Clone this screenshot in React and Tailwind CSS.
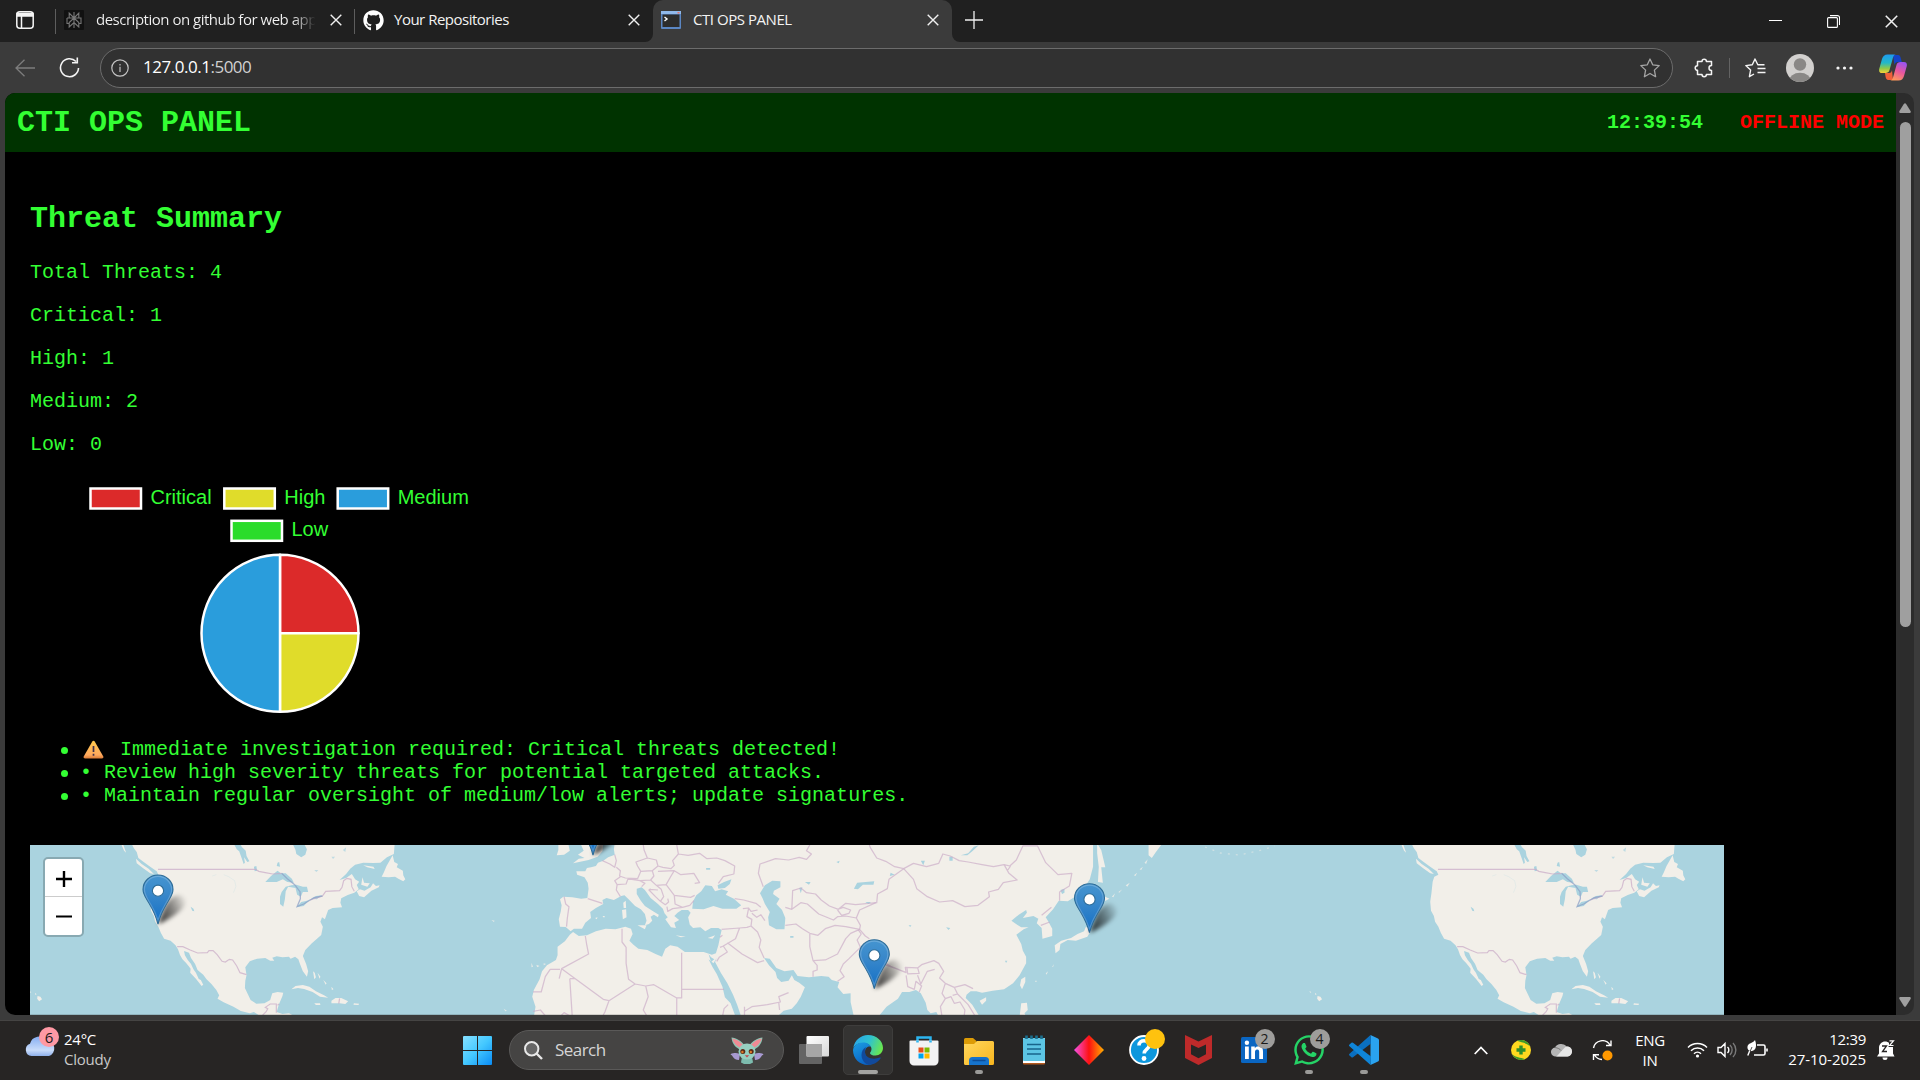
import React from "react";
import { FaWhatsapp, FaGithub } from "react-icons/fa";

const UI = "font-['Open_Sans','Noto_Sans',sans-serif]";
const MONO = "font-['Liberation_Mono',monospace]";

/* ---------- small shared icons ---------- */

function Cross({ size = 12, className = "" }) {
  return (
    <svg width={size} height={size} viewBox="0 0 12 12" className={className} fill="none" stroke="#f0f0f0" strokeWidth="1.4">
      <path d="M.7.7 11.3 11.3M11.3.7.7 11.3" />
    </svg>
  );
}

/* ---------- browser tab strip ---------- */

function TabStrip() {
  return (
    <div className={`flex h-[42px] w-full bg-[#202020] text-[15px] text-[#f3f3f3] ${UI}`}>
      <div className="flex h-10 w-[55px] items-center pl-4">
        <svg width="18" height="18" viewBox="0 0 18 18" fill="none" stroke="#f5f5f5" strokeWidth="1.5">
          <rect x=".8" y=".8" width="16.4" height="16.4" rx="3" />
          <path d="M1 2.5h16v2.5H1z" fill="#f5f5f5" />
          <path d="M5.5 5v12" />
        </svg>
      </div>
      <div className="mt-[9px] h-[25px] w-px bg-[#5e5e5e]" />
      <div className="flex h-10 w-[298px] items-center pl-2">
        <svg width="20" height="20" viewBox="0 0 20 20" className="shrink-0">
          <rect width="20" height="20" rx="1" fill="#111" />
          <g fill="none" stroke="#777" strokeWidth="1.1">
            <path d="M10 2v16M10 8 5.2 3.2V8M10 8l4.800-4.800V8M3 8h14v5.500h-2.200M3 8v5.500h2.200M10 8l-4.800 4.600V17L10 12.600l4.800 4.400v-4.400L10 8" />
          </g>
        </svg>
        <div className="-mt-0.5 ml-3 w-[224px] overflow-hidden bg-[linear-gradient(90deg,#f3f3f3_88%,#f3f3f300_98%)] bg-clip-text whitespace-nowrap text-transparent tracking-[-0.49px]">
          description on github for web app
        </div>
        <Cross className="ml-[10px] shrink-0" />
      </div>
      <div className="mt-[9px] h-[25px] w-px bg-[#5e5e5e]" />
      <div className="flex h-10 w-[298px] items-center pl-2">
        <FaGithub size={21} color="#fff" />
        <div className="-mt-0.5 ml-[10px] w-[234px] tracking-[-0.5px]">Your Repositories</div>
        <Cross className="shrink-0" />
      </div>
      <svg width="8" height="8" className="-ml-2 mr-0 self-end" viewBox="0 0 8 8"><path d="M8 0A8 8 0 0 1 0 8H8z" fill="#3b3b3b" /></svg>
      <div className="flex h-[42px] w-[299px] items-center rounded-t-[10px] bg-[#3b3b3b] pb-0.5 pl-2">
        <svg width="20" height="18" viewBox="0 0 20 18">
          <rect width="20" height="18" rx="1" fill="#5b87c4" />
          <rect width="20" height="3" fill="#8fb8ea" />
          <path d="M16.500 1h2v1.500h-2z" fill="#e0716a" />
          <rect x="1.500" y="3.500" width="17" height="12.500" fill="#2c2c2c" />
          <path d="M3.500 6 6 8 3.500 10" stroke="#fff" strokeWidth="1.400" fill="none" />
        </svg>
        <div className="-mt-0.5 ml-[12px] w-[234px] tracking-[-0.45px]">CTI OPS PANEL</div>
        <Cross className="shrink-0" />
      </div>
      <svg width="8" height="8" className="-mr-2 self-end" viewBox="0 0 8 8"><path d="M0 0A8 8 0 0 0 8 8H0z" fill="#3b3b3b" /></svg>
      <svg width="18" height="18" viewBox="0 0 18 18" className="mt-[11px] ml-[13px]" stroke="#f0f0f0" strokeWidth="1.300">
        <path d="M9 0v18M0 9h18" />
      </svg>
      <div className="mr-[22px] ml-auto flex items-center gap-[45px]">
        <svg width="13" height="12" stroke="#fff" strokeWidth="1"><path d="M0 5.500h13" /></svg>
        <svg width="13" height="13" viewBox="0 0 13 13" fill="none" stroke="#fff" strokeWidth="1.100">
          <rect x=".6" y="2.600" width="9.800" height="9.800" rx="1" />
          <path d="M3 .6h7.500a2 2 0 0 1 2 2V10" />
        </svg>
        <Cross size={13} />
      </div>
    </div>
  );
}

/* ---------- browser toolbar ---------- */

function Toolbar() {
  return (
    <div className={`flex h-[51px] w-full items-center bg-[#3b3b3b] ${UI}`}>
      <svg width="16" height="18" viewBox="0 0 20 18" className="ml-[15px] w-5" fill="none" stroke="#7d7d7d" strokeWidth="1.300">
        <path d="M20 9H1M9.500 .8 1 9l8.500 8.200" />
      </svg>
      <svg width="21" height="21" viewBox="0 0 21 21" className="ml-[24px]" fill="none" stroke="#f4f4f4" strokeWidth="1.600">
        <path d="M17 4.500A9 9 0 1 0 19.500 11M18.300.5v5.300h-5.300" />
      </svg>
      <div className="ml-5 flex h-10 w-[1573px] items-center rounded-full border border-[#6c6c6c] bg-[#313131]">
        <svg width="18" height="18" viewBox="0 0 18 18" className="ml-[10px]" fill="none" stroke="#c4c4c4" strokeWidth="1.200">
          <circle cx="9" cy="9" r="8.200" />
          <path d="M9 7.800V13M9 5v1.400" />
        </svg>
        <div className="-mt-px ml-3.5 text-[17px] tracking-[-0.480px] text-white">127.0.0.1<span className="text-[#d0d0d0]">:5000</span></div>
        <svg width="20" height="20" viewBox="0 0 20 20" className="mr-3 ml-auto" fill="none" stroke="#a5a5a5" strokeWidth="1.300" strokeLinejoin="round">
          <path d="M10 1 12.700 6.800 19.200 7.600 14.400 12.100 15.600 18.700 10 15.500 4.400 18.700 5.600 12.100.8 7.600 7.300 6.800z" />
        </svg>
      </div>
      <svg width="20" height="20" viewBox="0 0 20 20" className="ml-[21px]" fill="none" stroke="#f4f4f4" strokeWidth="1.500" strokeLinejoin="round">
        <path d="M3.500 3.500H8a2.200 2.200 0 0 1 4.400 0H17.500V7.500a2.500 2.500 0 0 0 0 5V16.500H12.400a2.200 2.200 0 0 1-4.400 0H3.500V12.300a2.300 2.300 0 0 1 0-4.600z" />
      </svg>
      <div className="ml-[15px] h-5 w-px bg-[#636363]" />
      <svg width="21" height="20" viewBox="0 0 21 20" className="ml-[15px]" fill="none" stroke="#f4f4f4" strokeWidth="1.400" strokeLinejoin="round">
        <path d="M19.500 6.800 12.800 6.800 10 1 7.300 6.800.8 7.600 5.600 12.100 4.400 18.700 9 16M12.500 10.500h8M12.500 14.500h8" />
      </svg>
      <svg width="28" height="28" viewBox="0 0 28 28" className="ml-5">
        <clipPath id="avatarClip"><circle cx="14" cy="14" r="14" /></clipPath>
        <g clipPath="url(#avatarClip)">
          <rect width="28" height="28" fill="#d2d0ce" />
          <circle cx="14" cy="10.500" r="6.200" fill="#8a8886" />
          <ellipse cx="14" cy="27" rx="11" ry="8.300" fill="#8a8886" />
        </g>
      </svg>
      <svg width="17" height="4" viewBox="0 0 17 4" className="ml-[22px]" fill="#f4f4f4">
        <circle cx="2" cy="2" r="1.600" /><circle cx="8.500" cy="2" r="1.600" /><circle cx="15" cy="2" r="1.600" />
      </svg>
      <svg width="28" height="27" viewBox="0 0 28 27" className="ml-[26px]">
        <defs>
          <linearGradient id="copL" x1="0" y1="0" x2="0" y2="1">
            <stop offset="0" stopColor="#1e9bf0" /><stop offset=".45" stopColor="#23b8c9" /><stop offset=".75" stopColor="#8fc94a" /><stop offset="1" stopColor="#f7d038" />
          </linearGradient>
          <linearGradient id="copR" x1=".7" y1="0" x2=".3" y2="1">
            <stop offset="0" stopColor="#9b54f0" /><stop offset=".5" stopColor="#e9579c" /><stop offset="1" stopColor="#ff9a5a" />
          </linearGradient>
        </defs>
        <path d="M14 1h5c2 0 2.500 2 3 4l.8 3H19c-2 0-3 1-3.500 3z" fill="#1443c8" />
        <path d="M14 26H9.500c-2 0-2.500-1.500-3-3.500L6 19h4c2 0 2.500-1 3-3z" fill="#f0603a" />
        <path d="M8.500.5H17c-2 0-2.500 1.500-3 3L10.500 16c-.6 2.200-2 3-4 3H3C.6 19-.2 17.500.2 15L3 5C4 2 5.500.5 8.500.5z" fill="url(#copL)" />
        <path d="M19.500 26.500H11c2 0 2.500-1.500 3-3l3.500-12.500c.6-2.200 2-3 4-3H25c2.400 0 3.200 1.500 2.800 4L25 22c-1 3-2.500 4.500-5.500 4.500z" fill="url(#copR)" />
      </svg>
    </div>
  );
}

/* ---------- chart ---------- */

const legend = [
  { label: "Critical", color: "#dc2a2a", x: 60.500, y: 12.500 },
  { label: "High", color: "#e0dc2a", x: 194.300, y: 12.500 },
  { label: "Medium", color: "#2a9ddc", x: 307.700, y: 12.500 },
  { label: "Low", color: "#2adc2a", x: 201.500, y: 44.800 },
];

function ThreatChart() {
  return (
    <svg width="500" height="250" viewBox="0 0 500 250" className="block">
      {legend.map((l) => (
        <g key={l.label}>
          <rect x={l.x} y={l.y} width="50.500" height="20" fill={l.color} stroke="#fff" strokeWidth="2.500" />
          <text x={l.x + 60} y={l.y + 15.500} fill="#33ff33" fontSize="20" fontFamily="Liberation Sans, Arial, sans-serif">{l.label}</text>
        </g>
      ))}
      <g stroke="#fff" strokeWidth="2.500" strokeLinejoin="round">
        <path d="M250 157.300V78.800A78.500 78.500 0 0 1 328.500 157.300z" fill="#dc2a2a" />
        <path d="M250 157.300H328.500A78.500 78.500 0 0 1 250 235.800z" fill="#e0dc2a" />
        <path d="M250 157.300V235.800A78.500 78.500 0 0 1 250 78.800z" fill="#2a9ddc" />
      </g>
    </svg>
  );
}

/* ---------- map ---------- */

function NorthAmerica() {
  return (
    <g transform="translate(-30,-15) scale(0.40816,0.33333)">
      <g fill="#f2efe9">
        <path d="M322 40 328 55 335 66 339 84 352 96 368 110 384 124 388 134 378 140 374 155 371 190 368 215 370 242 377 258 380 275 388 290 394 308 402 326 418 332 430 346 436 358 441 375 447 388 456 399 462 408 467 416 466 428 480 446 494 468 498 464 492 450 487 447 480 428 474 418 468 402 460 390 453 376 451 363 463 368 468 384 478 402 484 420 498 434 506 448 518 462 530 480 537 496 533 506 548 517 572 530 590 543 612 550 622 546 640 560H724L708 550 692 552 678 546 683 524 692 498 694 488 680 486 667 490 662 510 648 520 628 521 614 510 607 492 600 474 601 452 604 436 601 412 612 394 630 386 650 384 662 392 672 392 667 383 678 379 692 382 708 380 712 386 723 380 731 388 735 402 742 424 752 440 755 424 750 402 742 378 748 360 764 340 778 325 787 315 791 290 785 275 789 262 796 268 804 240 815 234 838 232 834 218 836 205 852 195 868 188 879 178 874 165 880 155 870 148 862 132 848 144 832 150 848 132 858 116 870 104 890 98 915 99 932 98 948 82 965 72 967 40Z" />
        <path d="M962 76 966 96 975 102 972 112 987 122 988 136 993 148 988 154 976 146 968 140 952 142 935 140 940 128 947 108 953 95ZM874 184 882 178 893 182 908 172 914 160 921 168 930 166 928 172 910 182 892 202 880 198ZM888 142 892 158 906 160 900 170 885 164ZM890 106 915 110 918 117 900 112ZM333 86 347 102 364 116 377 132 368 130 350 114 335 100ZM296 40 304 62 309 68 302 44Z" />
        <path d="M714 478 724 468 742 465 758 470 774 484 794 496 804 503 784 500 766 486 745 477 730 474ZM812 512 822 504 836 504 853 514 846 522 832 520 812 520ZM770 520 784 520 785 525 774 525ZM867 520 880 521 878 525 866 524ZM92 498 99 500 103 508 96 514 91 506ZM86 489 90 493 86 494ZM72 484 77 486 74 488ZM767 424 771 428 774 442 770 448ZM778 428 785 440 783 446ZM792 450 800 460 798 464ZM812 470 817 478 813 480Z" />
      </g>
      <g fill="#aad3df">
        <path d="M574 44 580 58 586 64 592 84 597 102 600 98 598 82 606 96 611 94 604 78 602 62 592 50 590 44ZM718 44 724 60 726 72 738 82 748 74 752 58 746 44ZM650 156 664 138 680 122 688 130 700 130 715 146 720 158 704 156 693 148 678 156ZM690 186 700 170 714 166 726 164 742 170 752 170 755 186 742 186 737 200 728 194 724 174 706 170 700 184 698 208 694 230 686 222 686 200ZM726 232 738 216 752 212 760 208 744 228ZM762 206 774 198 789 196 776 208ZM467 230 474 236 476 244 471 242ZM680 98 684 96 686 110 678 108ZM622 110 628 108 630 122 624 124Z" />
        <path d="M770 120h10l-5 6zM812 80h9l-5 7zM840 60l8-8-2 14z" opacity=".7" />
      </g>
      <g fill="none" stroke="#aad3df" strokeWidth="1" opacity=".5">
        <path d="M520 138 530 134M548 134 560 140 575 152 578 170 572 188" />
      </g>
      <g fill="none" stroke="#c9a9c6" strokeWidth="1.200" strokeOpacity=".7">
        <path vectorEffect="non-scaling-stroke" d="M387 118H626L634 124 650 128 668 132 690 130M760 210 790 198 798 184 832 182 838 172 842 152 850 145 860 148 862 170 868 184M434 350 448 350 466 360 484 369 508 368 512 362 522 362 532 374 544 394 552 396 562 388 570 390 580 408 588 428 604 434M640 560 652 545 656 536 650 532 662 522 677 522 677 548M680 526 684 522M832 505 830 521" />
        <path vectorEffect="non-scaling-stroke" stroke="#8a9dc4" strokeWidth="1.300" d="M690 130 704 146 722 164 735 185 736 206 728 230 744 222 760 210 770 203 790 198" />
      </g>
    </g>
  );
}

function Eurasia() {
  return (
    <g transform="translate(530,-15) scale(0.40816,0.33333)">
      <path fill="#f2efe9" d="M134 40 132 58 134 74 118 82 106 92 93 98 88 108 76 112 66 114 62 124 40 124 42 134 60 142 68 158 70 176 67 204 52 206 30 202 8 200 0 208 4 226 2 244 -3 268 0 290 14 291 26 304 34 296 54 296 62 278 76 264 74 246 88 234 106 222 104 210 114 204 132 210 150 198 158 196 168 208 184 228 198 238 208 252 212 272 208 286 218 282 226 272 222 260 230 254 240 262 242 254 226 242 208 228 198 212 188 192 188 176 200 172 208 180 222 204 240 222 252 236 256 250 264 262 258 268 272 292 284 294 280 278 292 270 280 258 288 248 298 240 314 240 320 248 314 262 318 284 326 294 344 292 356 304 370 294 388 294 396 300 392 322 388 346 382 370 372 374 352 366 328 366 306 366 288 350 270 346 258 356 250 380 234 372 214 360 192 356 180 344 170 332 178 312 174 296 160 290 136 298 112 296 88 304 66 316 46 318 32 306 24 314 12 334 -6 350 -6 376 -10 390 -32 406 -44 424 -50 448 -64 480 -68 500 -60 530 -64 560H430L418 520 404 502 398 470 384 432 374 412 364 388 376 400 384 384 380 396 394 428 410 460 424 494 434 524 444 560H532L548 542 568 536 580 520 590 500 600 472 586 458 574 450 568 436 560 452 542 456 532 444 528 426 512 406 500 384 514 386 530 414 550 424 572 420 582 438 610 442 640 438 658 440 666 450 684 456 680 472 694 492 712 490 712 516 720 560H780L800 530 828 506 838 486 856 486 872 480 884 490 896 518 900 540 908 550 922 546 928 560H1028L1010 524 994 504 996 494 1006 484 1020 484 1034 488 1060 482 1088 478 1110 460 1126 436 1142 400 1142 380 1134 362 1130 342 1118 314 1136 298 1148 292 1130 292 1120 284 1106 272 1124 254 1142 240 1144 248 1134 264 1160 258 1172 266 1168 280 1180 294 1182 326 1206 318 1206 296 1196 274 1190 262 1208 238 1222 212 1244 214 1262 200 1284 174 1298 148 1306 110 1306 40Z" />
      <g fill="#f2efe9">
        <path d="M50 40H106L104 64 92 80 70 90 32 100 46 86 60 84 44 74 58 62ZM-4 40H20L24 62 10 74 -8 76 -4 60ZM152 240 162 238 163 262 154 268ZM155 218 161 212 162 234 156 234ZM190 286 212 286 208 298ZM283 316 308 320 296 322ZM362 324 380 316 374 326ZM86 264 92 262 90 268ZM104 258h6l-2 5zM1316 40 1326 60 1336 112 1326 112 1330 158 1318 156 1320 110 1316 70ZM1442 40H1476L1460 66 1450 84 1442 76ZM1280 212 1300 200 1322 192 1346 206 1334 214 1302 220 1286 232ZM1212 346 1228 332 1252 324 1268 312 1284 304 1288 292 1300 290 1300 304 1292 320 1264 332 1244 330 1226 342 1224 360 1214 370ZM1130 448 1140 440 1140 456 1132 478 1127 466ZM1028 512 1044 502 1044 512 1034 524ZM1130 520 1144 518 1146 540 1138 550 1142 560H1126Z" />
        <path opacity=".8" d="M1352 200 1360 190 1356 202ZM1368 186 1378 178 1370 188ZM1386 166 1396 158 1390 170ZM1406 136 1414 128 1410 138ZM1420 118 1428 110 1424 120ZM1432 98 1440 88 1436 102ZM1206 410 1210 402 1208 412ZM1190 430 1196 424 1192 434ZM1164 452h4v3h-4zM-168 270 -160 272 -162 276ZM-70 398 -66 410 -70 412ZM-58 404 -50 408 -56 412ZM-40 400 -34 402 -40 406ZM-138 536 -130 542 -134 544Z" />
      </g>
      <g fill="#aad3df">
        <path d="M324 236 326 214 334 196 346 184 356 166 372 168 380 184 396 178 412 184 406 194 426 206 444 226 432 236 398 236 376 228 352 238ZM386 166 402 156 420 148 416 162 404 174 388 176ZM490 190 502 166 520 152 540 154 540 172 524 182 522 192 538 206 530 222 544 240 552 264 550 298 530 298 512 286 510 262 514 246 502 222 496 204ZM720 176 728 158 770 154 768 164 742 164 730 178ZM982 76 1000 70 1014 50 1026 46 1010 64 998 76ZM884 92 894 92 890 106ZM954 80h8v12h-8zM810 128 820 134 808 138ZM748 216 762 216 756 222ZM600 156 614 156 610 164ZM586 174 594 172 590 190ZM564 318h8v5h-8zM946 292 956 294 952 300ZM854 286h7l-3 5zM1090 392h6l-3 7zM677 96 685 92 683 100ZM364 372 370 382 378 388 370 396ZM358 114h10v5h-10zM1226 180 1236 176 1236 188 1230 192Z" />
      </g>
      <g fill="none" stroke="#c9a9c6" strokeWidth="1.250" strokeOpacity=".65" strokeLinejoin="round">
        <path vectorEffect="non-scaling-stroke" d="M104 92 122 102 134 112 138 92 134 74M138 112 148 122 146 138 160 144 190 146 198 124 190 108 186 96 214 84 206 60 204 45M214 84 236 90 240 108 226 122 198 124M240 108 252 112 272 116 280 106 276 92 290 72 286 45M290 72 314 76 342 70 360 86 384 84 404 92 428 108 426 132 400 140 388 160M280 122 296 134 328 130 342 158 330 160M226 122 230 138 222 150 196 152 176 148 166 148 162 162 140 164 134 152 148 140M140 164 138 180 148 200M222 150 236 166 260 164 272 138 280 122 240 124M260 164 280 196 320 202 330 196M280 196 282 222 300 232 318 226 328 212M236 166 248 178 254 200 246 214 234 200 218 180 222 176M246 214 258 224 266 216 264 206M262 230 264 244 276 236 300 232M196 152 208 160 200 170M220 178 240 180M10 200 14 222 22 230 18 264 16 290M68 206 104 220" />
        <path vectorEffect="non-scaling-stroke" d="M428 206 450 210 480 220 492 232M448 236 462 234 468 244 484 240M462 236 458 260 470 268 468 288 484 306 492 330 488 352 500 384M470 250 482 262 492 254 502 272M396 298 440 294 458 292 468 288M440 294 430 326 400 348 392 352M400 348 410 366 390 382 384 394M410 338 446 372 484 398 500 392M392 322 398 316M552 286 578 282 594 296 612 310 632 316 650 296 674 286 700 290 734 298M612 312 612 350 620 392 650 390 680 372 700 326 712 310 734 298M620 392 630 406 630 420 620 424 620 440M552 232 568 238 570 182 590 174 604 188 626 192 640 210 660 228 682 238 700 220 724 224 776 218 778 192 802 176 806 148 842 116 820 110 798 94 776 84 760 52 758 45M498 170 486 130 490 102 528 86 560 90 586 82 604 88 616 72 604 62 612 45M568 238 590 218 606 222 634 252 670 270 680 260 700 258 726 264M680 238 694 232 712 240 708 250 690 256 680 240" />
        <path vectorEffect="non-scaling-stroke" d="M842 116 866 100 898 110 928 100 938 72 956 78 978 92 1000 96 1034 104 1062 110 1088 104 1100 130 1120 150 1086 158 1074 178 1050 186 1052 200 1024 226 992 230 962 212 930 216 900 200 874 176 866 148 842 116M1088 104 1102 108 1118 90 1134 48 1170 48 1190 98 1220 134 1254 130 1248 168 1224 186 1224 212M1104 108 1096 122M1180 256 1204 232M1178 286 1200 276M726 264 734 240 774 218M726 264 736 286 734 298 748 318 758 326M730 298 738 312 728 330 736 352 708 386 694 402 686 422 696 440 680 454M770 380 790 394 812 410 848 428 846 412 876 414 886 404 916 392 928 400 940 424 930 444 944 460 966 472 992 464 1012 476M790 394 796 404 846 426M850 414 852 432 880 430 876 412M848 436 852 470 868 478 872 454 886 468 880 486M876 436 884 462 900 424 918 418M944 460 936 490 944 506 932 530 936 560M944 506 958 500 966 520 980 516 992 540 990 560M966 472 974 492 962 496M974 492 1000 524 1018 560" />
        <path vectorEffect="non-scaling-stroke" d="M152 296 152 336 162 352 162 400 168 448 184 462 120 512 106 508 4 416 70 372 66 348 62 318M4 416 -2 446M0 418H-24L-36 440 -46 486H-66M24 446 30 560M24 446H38M184 462 210 468 216 500 204 540 214 560M210 468 230 464 286 504V560M298 368V504H286M298 478H402M120 512 110 546 104 560M-66 544 -48 540 -34 560M0 560 10 548 28 560M412 524 402 536 398 560M452 544 470 530 508 524 540 516 536 500 560 488M452 530 452 560M536 518 538 540" />
      </g>
    </g>
  );
}

function PinShape({ x, y }) {
  return (
    <g transform={`translate(${x},${y})`}>
      <path d="M0 0 6-16C10-26 18-31 24-28C30-25 28-18 22-13C16-8 8-3 0 0z" fill="url(#pinShade)" filter="url(#pinBlur)" />
      <path d="M0 0C-1.500-6-5-14-8.500-20C-12-26-15-29.500-15-34.500A15 14.500 0 0 1 15-34.500C15-29.500 12-26 8.500-20C5-14 1.500-6 0 0z" fill="url(#pinFill)" stroke="#2e6c97" strokeWidth="1.100" />
      <path d="M0-4C-2-10-5-16-7.500-20C-11-26-13.600-29.500-13.600-34.500A13.600 13.100 0 0 1 13.600-34.500C13.600-29.500 11-26 7.500-20C5-16 2-10 0-4z" fill="none" stroke="#fff" strokeOpacity=".2" strokeWidth="1.200" />
      <circle cx="0" cy="-33.300" r="5.600" fill="#fff" stroke="#2e6c97" strokeWidth="1.100" />
    </g>
  );
}

function WorldMap() {
  return (
    <div className="grid h-[170px] w-[1694px] overflow-hidden">
      <svg width="1694" height="170" viewBox="0 0 1694 170" className="col-start-1 row-start-1 block bg-[#aad3df]">
        <defs>
          <linearGradient id="pinFill" x1="0" y1="0" x2="0" y2="1">
            <stop offset="0" stopColor="#4595d0" /><stop offset=".4" stopColor="#3887ca" /><stop offset="1" stopColor="#126fc6" />
          </linearGradient>
          <linearGradient id="pinShade" x1="0" y1=".7" x2="1" y2=".2">
            <stop offset="0" stopColor="#000" stopOpacity=".75" /><stop offset=".5" stopColor="#000" stopOpacity=".45" /><stop offset="1" stopColor="#000" stopOpacity=".05" />
          </linearGradient>
          <filter id="pinBlur" x="-50%" y="-50%" width="200%" height="200%"><feGaussianBlur stdDeviation="2" /></filter>
        </defs>
        <NorthAmerica />
        <g transform="translate(1280,0)"><NorthAmerica /></g>
        <Eurasia />
        <g fill="none" stroke="#f2efe9" strokeDasharray="2 6" strokeWidth="1.300" opacity=".5">
          <path d="M1175 2 1190 8 1210 10 1232 5 1245 1" />
        </g>
        <PinShape x={563} y={10} />
        <PinShape x={128} y={79} />
        <PinShape x={1059.500} y={87.700} />
        <PinShape x={844.300} y={143.700} />
        <path d="M0 169.500H1694" stroke="#000" strokeOpacity=".14" />
      </svg>
      <div className="col-start-1 row-start-1 mt-3 ml-[13px] flex h-[80px] w-[41px] flex-col self-start rounded-[5px] border-2 border-[#88a9b2] bg-white">
        <div className="flex h-[38px] items-center justify-center border-b border-[#ccc]">
          <svg width="16" height="16" className="mt-0.5" stroke="#000" strokeWidth="2.400"><path d="M8 0V16M0 8H16" /></svg>
        </div>
        <div className="flex flex-1 items-center justify-center">
          <svg width="16" height="16" stroke="#000" strokeWidth="2.200"><path d="M0 8.500H16" /></svg>
        </div>
      </div>
    </div>
  );
}

/* ---------- page ---------- */

function Bullet() {
  return <span className="mt-0.5 mr-[12px] ml-[31px] size-[7px] shrink-0 rounded-full bg-[#33ff33]" />;
}

function Page() {
  return (
    <div className={`flex h-[922px] w-[1891px] flex-col overflow-hidden bg-black text-[20px] leading-[23px] text-[#33ff33] ${MONO}`}>
      <header className="flex h-[59px] shrink-0 items-center bg-[#003300] px-3 font-bold">
        <h1 className="text-[30px] leading-[34px]">CTI OPS PANEL</h1>
        <span className="ml-auto">12:39:54</span>
        <span className="ml-[37px] text-[#ff0000]">OFFLINE MODE</span>
      </header>
      <main className="flex flex-col pt-[50px] pl-[25px]">
        <h2 className="mb-[25px] text-[30px] leading-[34px] font-bold">Threat Summary</h2>
        <div className="flex flex-col gap-5">
          <p>Total Threats: 4</p>
          <p>Critical: 1</p>
          <p>High: 1</p>
          <p>Medium: 2</p>
          <p>Low: 0</p>
        </div>
        <div className="mt-5"><ThreatChart /></div>
        <ul className="mt-3 flex flex-col">
          <li className="flex h-[23px] items-center">
            <Bullet />
            <svg width="21" height="19" viewBox="0 0 21 19" className="mr-[16px] ml-[3px]">
              <defs>
                <linearGradient id="warnFill" x1="0" y1="0" x2="0" y2="1"><stop offset="0" stopColor="#ffc94d" /><stop offset=".8" stopColor="#ffa95e" /><stop offset="1" stopColor="#d97a36" /></linearGradient>
              </defs>
              <path d="M9.300 1.500a1.400 1.400 0 0 1 2.400 0L20.300 16.500a1.500 1.500 0 0 1-1.300 2H2a1.500 1.500 0 0 1-1.300-2z" fill="url(#warnFill)" />
              <path d="M10.500 6v6M10.500 13.800v2" stroke="#40304a" strokeWidth="1.700" />
            </svg>
            <span className="whitespace-pre">Immediate investigation required: Critical threats detected!</span>
          </li>
          <li className="flex h-[23px] items-center"><Bullet /><span>• Review high severity threats for potential targeted attacks.</span></li>
          <li className="flex h-[23px] items-center"><Bullet /><span>• Maintain regular oversight of medium/low alerts; update signatures.</span></li>
        </ul>
        <div className="mt-[38px]"><WorldMap /></div>
      </main>
    </div>
  );
}

function Scrollbar() {
  return (
    <div className="flex h-[922px] w-[18px] flex-col items-center bg-[#2c2c2c]">
      <svg width="12" height="10" viewBox="0 0 12 10" className="mt-[10px]"><path d="M5 .8Q6-.4 7 .8L11.700 8.300Q12 10 10.800 10H1.200Q0 10 .3 8.300z" fill="#9f9f9f" /></svg>
      <div className="mt-[9px] h-[505px] w-[11px] rounded-full bg-[#9f9f9f]" />
      <svg width="12" height="10" viewBox="0 0 12 10" className="mt-auto mb-2"><path d="M5 9.200Q6 10.400 7 9.200L11.700 1.700Q12 0 10.800 0H1.200Q0 0 .3 1.700z" fill="#9f9f9f" /></svg>
    </div>
  );
}

/* ---------- taskbar ---------- */

function EdgeIcon() {
  return (
    <svg width="30" height="30" viewBox="0 0 30 30">
      <defs>
        <linearGradient id="edTop" x1="0" y1=".3" x2="1" y2=".6"><stop offset="0" stopColor="#2aa6e8" /><stop offset=".5" stopColor="#2fc2cf" /><stop offset="1" stopColor="#6be84a" /></linearGradient>
        <linearGradient id="edL" x1="0" y1="0" x2=".5" y2="1"><stop offset="0" stopColor="#1b9de2" /><stop offset="1" stopColor="#0a62c4" /></linearGradient>
      </defs>
      <path d="M.3 13C1.500 5.500 7.500 0 15 0c8.500 0 15 6 15 13 0 4.500-3.500 7.500-7.500 7.500-3.500 0-5.500-1.300-5.500-2.600 0-.8 1.500-1.500 1.500-4C18.500 11 15 8 10 8 5.500 8 1.800 10 .3 13z" fill="url(#edTop)" />
      <path d="M0 15C.5 11 4.500 7.500 10 7.500c4 0 7 2 8 4.500-1.500-1-6-.5-6 5.500 0 6 5 9.500 9.500 9.500C19.500 29 17 30 15 30 6.500 30 0 23.500 0 15z" fill="url(#edL)" />
      <path d="M13 12c-3 1.500-4.500 4.500-4.500 8 0 5 3.500 9 7.500 10 5-.3 9-3 11.500-6.500.5-.8 0-1.200-.8-.9-6.200 2.700-14.700.5-14.700-5.600 0-2 .3-3.500 1-5z" fill="#114a9c" />
    </svg>
  );
}

function AppCell({ children, run }) {
  return (
    <div className="flex h-[50px] w-[55px] flex-col items-center pt-2.5">
      <div className="flex h-[30px] w-[30px] items-center justify-center">{children}</div>
      {run ? <div className="mt-[5px] h-1 w-2 rounded-full bg-[#9a9a98]" /> : null}
    </div>
  );
}

function Badge({ children, className }) {
  return (
    <span className={`absolute flex size-5 items-center justify-center rounded-full text-[14px] leading-none text-[#1a1a1a] ${className}`}>{children}</span>
  );
}

function Taskbar() {
  return (
    <div className={`flex h-[60px] w-full border-t border-[#454443] bg-[#272524] pt-1 text-[15px] leading-5 text-white ${UI}`}>
      <div className="relative mt-[4px] ml-[25px] flex w-[438px]">
        <svg width="31" height="25" viewBox="0 0 31 25" className="mt-[3px]">
          <defs><linearGradient id="cloudFill" x1="0" y1="0" x2="0" y2="1"><stop offset="0" stopColor="#86aef2" /><stop offset=".7" stopColor="#c9dcfa" /><stop offset="1" stopColor="#8fb0ea" /></linearGradient></defs>
          <path d="M6.500 24A6.300 6.300 0 0 1 5 11.800 9.500 9.500 0 0 1 22 8.500 8 8 0 0 1 24 24z" fill="url(#cloudFill)" />
        </svg>
        <Badge className="-top-[2px] left-[14px] bg-[#ff99a4] text-[15px]">6</Badge>
        <div className="ml-[8px] tracking-[-0.250px]">
          <div>24°C</div>
          <div className="text-[#c9c9c9]">Cloudy</div>
        </div>
      </div>
      <svg width="29" height="29" viewBox="0 0 29 29" className="mt-[11px]">
        <defs><linearGradient id="winFill" x1="0" y1="0" x2="1" y2="1"><stop offset="0" stopColor="#86e0ff" /><stop offset=".5" stopColor="#44c8ff" /><stop offset="1" stopColor="#0a8cf5" /></linearGradient></defs>
        <path d="M0 1a1 1 0 0 1 1-1H14V14H0zM15 0H28a1 1 0 0 1 1 1V14H15zM0 15H14V29H1a1 1 0 0 1-1-1zM15 15H29V28a1 1 0 0 1-1 1H15z" fill="url(#winFill)" />
      </svg>
      <div className="mt-[5px] ml-[17px] flex h-10 w-[275px] items-center rounded-full border border-[#5a5958] bg-[#454443]">
        <svg width="19" height="19" viewBox="0 0 19 19" className="ml-[14px]" fill="#666" stroke="#e8e8e8" strokeWidth="2">
          <circle cx="7.700" cy="7.700" r="6.700" /><path d="M12.500 12.500 18 18" strokeWidth="2.400" />
        </svg>
        <span className="ml-[12px] text-[17px] tracking-[-0.550px] text-[#d5d5d5]">Search</span>
        <svg width="34" height="27" viewBox="0 0 34 27" className="mr-[19px] ml-auto">
          <path d="M10 17C5 15 1 16 .5 17.500 3 18 3 23 9 23zM24 17c5-2 9-1 9.500.500C31 18 31 23 25 23z" fill="#a89ad2" />
          <path d="M11 13C6 11 2 7 1.500.5 6 1 12 4 14 8zM23 13c5-2 9-6 9.500-12.500C28 1 22 4 20 8z" fill="#8fc5b4" />
          <path d="M11 11C7 9.500 3.500 6 2.300 1.500 7 2.500 10 4.500 13 8zM23 11c4-1.500 7.500-5 8.700-9.500C27 2.500 24 4.500 21 8z" fill="#f08a94" />
          <path d="M12 20h10l1 5.500-3 1.500h-6l-3-1.500z" fill="#7dbcae" />
          <ellipse cx="17" cy="14.500" rx="8.500" ry="8" fill="#96cfc0" />
          <circle cx="12.800" cy="14.500" r="2.500" fill="#5a2a16" /><circle cx="21.200" cy="14.500" r="2.500" fill="#5a2a16" />
          <circle cx="12.400" cy="15" r="1.200" fill="#e07a28" /><circle cx="20.800" cy="15" r="1.200" fill="#e07a28" />
          <path d="M14.800 18.300h4.400l-2.200 2.200z" fill="#c34a50" />
        </svg>
      </div>
      <div className="ml-[2px] flex">
        <AppCell>
          <svg width="30" height="28" viewBox="0 0 30 28">
            <defs><linearGradient id="tv" x1="0" y1="0" x2="1" y2="1"><stop offset="0" stopColor="#fff" /><stop offset="1" stopColor="#d8d8d8" /></linearGradient></defs>
            <rect x="0" y="8" width="23" height="20" rx="1" fill="#646464" /><rect x="7.500" y="0" width="22.500" height="20.500" rx="1" fill="url(#tv)" /><rect x="7.500" y="8" width="15.500" height="12.500" fill="#a6a6a6" />
          </svg>
        </AppCell>
        <div className="mr-[3px] ml-[2px] flex h-[50px] w-[50px] flex-col items-center rounded-[5px] border border-[#3e3d3c] bg-[#343332] pt-[9px]">
          <EdgeIcon />
          <div className="mt-[5px] h-1 w-5 rounded-full bg-[#a3a3a1]" />
        </div>
        <AppCell>
          <svg width="30" height="30" viewBox="0 0 30 30" className="mt-px">
            <path d="M8.500 6V1.500h13V6" fill="none" stroke="#2cb5ef" strokeWidth="2.500" />
            <path d="M.5 5.500a1 1 0 0 1 1-1h27a1 1 0 0 1 1 1V25a4.500 4.500 0 0 1-4.500 4.500H5A4.500 4.500 0 0 1 .5 25z" fill="#f3f3f3" />
            <path d="M9.500 11.500h5v5h-5z" fill="#e84e1c" /><path d="M15.500 11.500h5v5h-5z" fill="#7fba00" /><path d="M9.500 17.500h5v5h-5z" fill="#00a4ef" /><path d="M15.500 17.500h5v5h-5z" fill="#ffb900" />
            <path d="M8.500 4.500v2M21.500 4.500v2" stroke="#2cb5ef" strokeWidth="2.500" />
          </svg>
        </AppCell>
        <AppCell run>
          <svg width="30" height="27" viewBox="0 0 30 27" className="mt-0.5">
            <defs><linearGradient id="fold" x1="0" y1="0" x2="1" y2="1"><stop offset="0" stopColor="#ffd75e" /><stop offset="1" stopColor="#f9b61e" /></linearGradient></defs>
            <path d="M0 1.500A1.500 1.500 0 0 1 1.500 0H9l3.500 3v5H0z" fill="#dc9b06" />
            <path d="M0 6h10l3-3h15.500A1.500 1.500 0 0 1 30 4.500V25.500a1.500 1.500 0 0 1-1.500 1.500h-27A1.500 1.500 0 0 1 0 25.500z" fill="url(#fold)" />
            <path d="M5 27V22.500A3.500 3.500 0 0 1 8.500 19h13A3.500 3.500 0 0 1 25 22.500V27z" fill="#1673cc" /><path d="M8.500 22.500h13" stroke="#0d4c96" strokeWidth="1.500" />
          </svg>
        </AppCell>
        <AppCell>
          <svg width="22" height="30" viewBox="0 0 22 30">
            <rect y="3" width="22" height="26.500" rx="1" fill="#b35a1e" /><rect y="3" width="22" height="25" fill="#fff" /><rect y="3" width="22" height="23" rx="1" fill="#5cc5e4" />
            <path d="M4 9.500h14M4 14h14M4 19h14" stroke="#17648a" strokeWidth="1.600" /><path d="M3.500.5V4M8.500.5V4M13.500.5V4M18.500.5V4" stroke="#1b6f8e" strokeWidth="2.600" />
          </svg>
        </AppCell>
        <AppCell>
          <svg width="30" height="30" viewBox="0 0 30 30">
            <defs><linearGradient id="dia"><stop offset="0" stopColor="#f452e8" /><stop offset=".5" stopColor="#fd1111" /><stop offset="1" stopColor="#ffb000" /></linearGradient></defs>
            <path d="M15 0 30 15 15 30 0 15z" fill="url(#dia)" />
          </svg>
        </AppCell>
        <AppCell>
          <div className="relative h-[30px] w-[30px]">
            <svg width="30" height="30" viewBox="0 0 30 30">
              <circle cx="15" cy="15" r="14" fill="#0d97dd" stroke="#fff" strokeWidth="1.800" />
              <path d="M10 10.500C10 7 12.500 5.800 15 5.800s5.200 1.500 5.200 4.700c0 3.500-5 4-5 8" fill="none" stroke="#fff" strokeWidth="3.600" /><circle cx="15" cy="23.500" r="2.400" fill="#fff" />
            </svg>
            <Badge className="-top-[6px] left-[16px] bg-[#ffc20e]" />
          </div>
        </AppCell>
        <AppCell>
          <svg width="27" height="30" viewBox="0 0 27 30"><path d="M0 0 13.500 6.500 27 0V23L13.500 30 0 23zM6 9.500v9.800l7.500 4 7.500-4V9.500L13.500 13z" fill="#be2a2a" fillRule="evenodd" /></svg>
        </AppCell>
        <AppCell>
          <div className="relative h-[30px] w-[30px]">
            <svg width="26" height="26" viewBox="0 0 26 26" className="mt-0.5 ml-0.5">
              <rect width="26" height="26" rx="1.500" fill="#0a66c2" />
              <path d="M4 9.500h3.800V22H4zM10.200 9.500h3.600v1.800c.7-1.200 2-2 3.800-2 3.600 0 4.400 2.200 4.400 5.400V22h-3.800v-6.600c0-1.600-.1-3-2-3s-2.200 1.400-2.200 3V22h-3.800z" fill="#fff" /><circle cx="5.900" cy="5.800" r="2.200" fill="#fff" />
            </svg>
            <Badge className="-top-[6px] left-[16px] bg-[#9e9d9b]">2</Badge>
          </div>
        </AppCell>
        <AppCell run>
          <div className="relative h-[30px] w-[30px]">
            <FaWhatsapp size={34} color="#25d366" className="-mt-0.5 -ml-0.5" />
            <Badge className="-top-[6px] left-[16px] bg-[#9e9d9b]">4</Badge>
          </div>
        </AppCell>
        <AppCell run>
          <svg width="30" height="30" viewBox="0 0 30 30">
            <path d="M21.500 0 29 3.500a2 2 0 0 1 1 1.800V24.700a2 2 0 0 1-1 1.800L21.500 30z" fill="#2aa3f0" />
            <path d="M21.500 0 22 8.500 4 22.200a1.200 1.200 0 0 1-1.600 0L.5 20.500a1.200 1.200 0 0 1 0-1.800z" fill="#0a6fc0" />
            <path d="M21.500 30 22 21.500 4 7.800a1.200 1.200 0 0 0-1.600 0L.5 9.500a1.200 1.200 0 0 0 0 1.800z" fill="#0f85d8" />
          </svg>
        </AppCell>
      </div>
      <div className="ml-auto flex items-start">
        <svg width="14" height="9" viewBox="0 0 14 9" className="mt-[21px]" fill="none" stroke="#fff" strokeWidth="1.700"><path d="M.7 8 7 1.500 13.300 8" /></svg>
        <svg width="20" height="20" viewBox="0 0 20 20" className="mt-[15px] ml-[23px]">
          <circle cx="10" cy="10" r="10" fill="#ffd91f" /><path d="M6 .8A10 10 0 0 1 19.300 6.500C16 3 11 2.500 6 .8zM1 14c4 4 8 3 13 5.200A10 10 0 0 1 1 14z" fill="#3c9a2c" /><path d="M10 5.500v9M5.500 10h9" stroke="#2f8f2a" strokeWidth="3.400" />
        </svg>
        <svg width="21" height="14" viewBox="0 0 21 14" className="mt-[18px] ml-[20px]">
          <path d="M5 13.500A4.500 4.500 0 0 1 4 4.500 7 7 0 0 1 15.500 3.500 5 5 0 0 1 16.500 13.500z" fill="#b5b5b5" /><path d="M5 13.500C7 13 12 5 15.500 3.500A5 5 0 0 1 16.500 13.500z" fill="#e6e6e6" /><path d="M4 4.500C7 5 9 6 10 7.500" stroke="#777" fill="none" />
        </svg>
        <svg width="21" height="21" viewBox="0 0 21 21" className="mt-[15px] ml-[20px]" fill="none" stroke="#fff" strokeWidth="1.400">
          <path d="M1.500 8A9 9 0 0 1 18 5M19 .5V5.500H14M10 19.500A9 9 0 0 1 2.500 15M1.500 20V14.800H7" /><circle cx="15.500" cy="15.500" r="5" fill="#ff9800" stroke="none" />
        </svg>
        <div className="mt-[5px] ml-[17px] w-[40px] text-center text-[15px] tracking-[-0.300px]">
          <div>ENG</div>
          <div>IN</div>
        </div>
        <svg width="21" height="16" viewBox="0 0 21 16" className="mt-[17px] ml-[17px]" fill="none" stroke="#fff" strokeWidth="1.500">
          <path d="M1 5.500a13.500 13.500 0 0 1 19 0M4 8.700a9.200 9.200 0 0 1 13 0M7 11.700a5 5 0 0 1 7 0" /><circle cx="10.500" cy="14" r="1.600" fill="#fff" stroke="none" />
        </svg>
        <svg width="21" height="16" viewBox="0 0 21 16" className="mt-[17px] ml-[9px]" fill="none" stroke="#fff" strokeWidth="1.400">
          <path d="M1 5.500h3l4-4v13l-4-4H1zM10.500 5a4 4 0 0 1 0 6" /><path d="M13 3a7 7 0 0 1 0 10M16 1a10 10 0 0 1 0 14" stroke="#7a7a7a" />
        </svg>
        <svg width="21" height="17" viewBox="0 0 21 17" className="mt-[15px] ml-[9px]" fill="none" stroke="#fff" strokeWidth="1.600">
          <path d="M10 5h6.500a1.500 1.500 0 0 1 1.500 1.500v7a1.500 1.500 0 0 1-1.500 1.500H7M20 8.500v3" /><path d="M8 0c1.500 4 2 10-3 11C1 12-1 7 1.500 4.500 3 3 6 3 8 0z" fill="#fff" stroke="none" /><path d="M1.500 15 5 7" stroke="#272524" strokeWidth=".8" /><path d="M.8 15.500 2.600 11" strokeWidth="1.400" />
        </svg>
        <div className="mt-[4px] ml-[18px] w-[80px] text-right text-[15px] tracking-[-0.050px] whitespace-nowrap">
          <div className="tracking-[-0.300px]">12:39</div>
          <div>27-10-2025</div>
        </div>
        <svg width="18" height="20" viewBox="0 0 18 20" className="mt-[15px] mr-[25px] ml-[11px]">
          <path d="M0 16.500 2 13.500V8C2 4 5 1.500 8 1.500c2 0 3 .5 4 1.500v4h4v6.500l1.500 3zM5.500 17.500h5a2.500 2.500 0 0 1-5 0z" fill="#fff" />
          <path d="M5 6h4.500L5.500 11.500H10M12.500 1h4L12.500 6h4" fill="none" stroke="#272524" strokeWidth="1.300" /><path d="M12.500.8h4L12.500 5.500h4" fill="none" stroke="#fff" strokeWidth="1.200" />
        </svg>
      </div>
    </div>
  );
}

export default function App() {
  return (
    <div className="flex h-[1080px] w-[1920px] flex-col overflow-hidden bg-[#3b3b3b]">
      <TabStrip />
      <Toolbar />
      <div className="mb-[5px] ml-[5px] flex h-[922px] w-[1909px] overflow-hidden rounded-[10px]">
        <Page />
        <Scrollbar />
      </div>
      <Taskbar />
    </div>
  );
}
